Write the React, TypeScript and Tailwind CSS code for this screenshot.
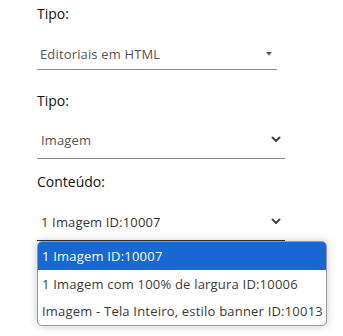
import React from "react";

const font = { fontFamily: "'Open Sans', 'Noto Sans', sans-serif" };

function Chevron() {
  return (
    <svg width="10" height="7" viewBox="0 0 10 7" className="block">
      <path d="M1.5 1.5 L5 5 L8.5 1.5" fill="none" stroke="#444" strokeWidth="2" strokeLinecap="round" strokeLinejoin="round" />
    </svg>
  );
}

function Caret() {
  return (
    <svg width="6" height="4" viewBox="0 0 6 4" className="block">
      <path d="M0 0 L6 0 L3 3.5 Z" fill="#555" />
    </svg>
  );
}

export default function App() {
  return (
    <div className="bg-white w-[343px] h-[336px] overflow-hidden pl-[37px] pt-[4px]" style={font}>
      <div className="h-[20px] leading-[20px] text-[14px] text-[#111]">Tipo:</div>
      <div className="w-[240px] h-[46px] border-b border-[#8a8a8a] flex items-end justify-between pl-[3px] pb-[5px] pr-[5px]">
        <span className="leading-[20px] text-[13px] text-[#555] tracking-[0.15px]">Editoriais em HTML</span>
        <span className="mb-[8px]"><Caret /></span>
      </div>

      <div className="mt-[21px] h-[20px] leading-[20px] text-[14px] text-[#111]">Tipo:</div>
      <div className="w-[248px] h-[48px] border-b border-[#8a8a8a] flex items-end justify-between pl-[4px] pb-[8px] pr-[4px]">
        <span className="leading-[20px] text-[13px] text-[#555] tracking-[0.15px]">Imagem</span>
        <span className="mb-[7px]"><Chevron /></span>
      </div>

      <div className="mt-[13px] h-[20px] leading-[20px] text-[14px] text-[#111]">Conteúdo:</div>
      <div className="w-[248px] h-[49px] border-b border-[#333] flex items-end justify-between pl-[4px] pb-[8px] pr-[4px]">
        <span className="leading-[20px] text-[13px] text-[#333] tracking-[0.15px]">1 Imagem ID:10007</span>
        <span className="mb-[7px]"><Chevron /></span>
      </div>

      <div className="w-[290px] rounded-[5px] border border-[#9a9a9a] overflow-hidden bg-white shadow-[0_0_10px_rgba(0,0,0,0.22)] text-[13px] tracking-[0.2px]">
        <div className="h-[28px] leading-[28px] bg-[#1967d2] text-white pl-[4px]">1 Imagem ID:10007</div>
        <div className="h-[28px] leading-[28px] text-[#3a3a3a] pl-[4px]">1 Imagem com 100% de largura ID:10006</div>
        <div className="h-[27px] leading-[27px] text-[#3a3a3a] pl-[4px] whitespace-nowrap">Imagem - Tela Inteiro, estilo banner ID:10013</div>
      </div>
    </div>
  );
}
